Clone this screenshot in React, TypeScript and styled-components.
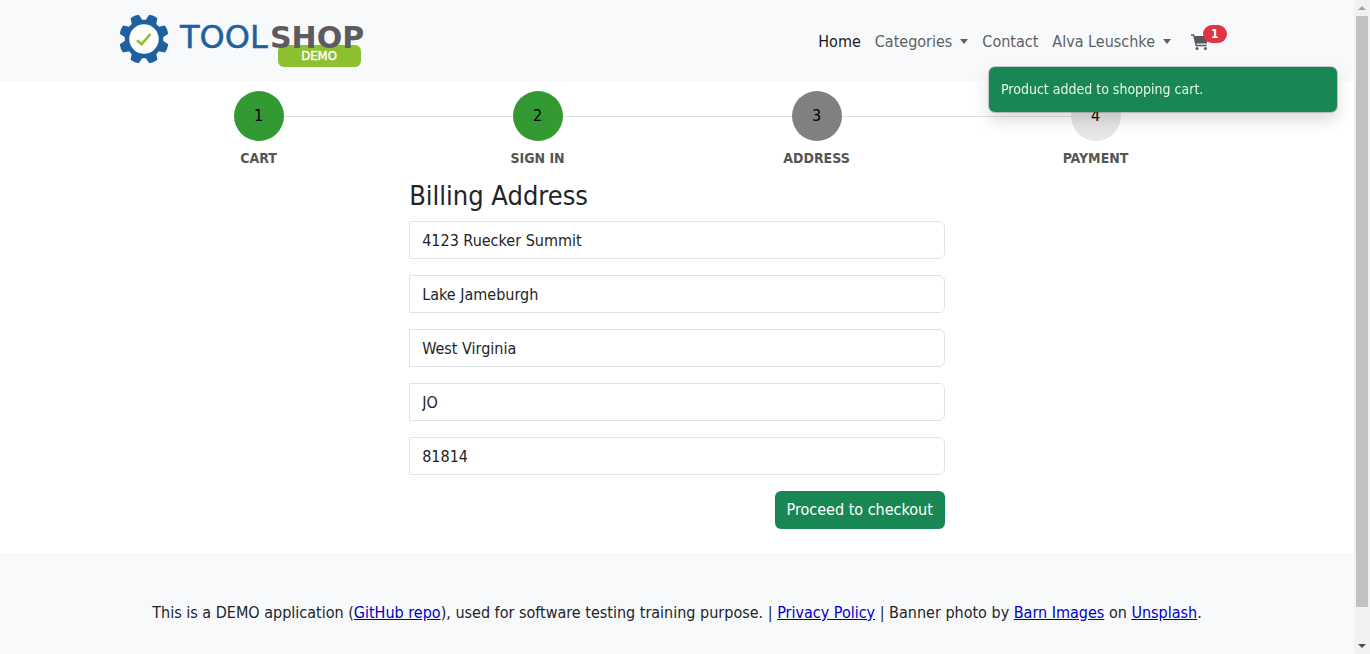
import React from 'react';
import styled, { createGlobalStyle } from 'styled-components';

const fontStack = '"DejaVu Sans Condensed", "DejaVu Sans", Tahoma, sans-serif';

const GlobalStyle = createGlobalStyle`
  *, *::before, *::after { box-sizing: border-box; }
  body {
    margin: 0;
    font-family: ${fontStack};
    font-size: 16px;
    line-height: 24px;
    color: #212529;
    background: #fff;
  }
`;

const Page = styled.div`
  display: flex;
  flex-direction: column;
  min-height: 100vh;
  padding-right: 16px;
`;

const Header = styled.header`
  background: #f8f9fb;
`;

const Container = styled.div`
  width: 100%;
  max-width: 1140px;
  margin: 0 auto;
  padding: 0 12px;
`;

const NavBar = styled(Container)`
  display: flex;
  align-items: center;
  justify-content: space-between;
  height: 81px;
`;

const Brand = styled.a`
  display: block;
  height: 56px;
`;

const NavList = styled.ul`
  display: flex;
  align-items: center;
  margin: 0;
  padding: 0 19px 0 0;
  list-style: none;
`;

const NavLink = styled.a<{ $active?: boolean }>`
  position: relative;
  display: flex;
  align-items: center;
  padding: 9px 7px 7px;
  text-decoration: none;
  color: ${(p) => (p.$active ? '#16181b' : '#5f6163')};
`;

const CartLink = styled(NavLink)`
  padding-left: 13px;
  color: #56585b;
`;

const Caret = styled.span`
  margin-left: 8px;
  border-top: 5px solid;
  border-left: 4px solid transparent;
  border-right: 4px solid transparent;
`;

const Badge = styled.span`
  position: absolute;
  top: 0;
  left: 25px;
  padding: 0 8px;
  border-radius: 9px;
  background: #dc3545;
  color: #fff;
  font-size: 12px;
  font-weight: 700;
  line-height: 18px;
`;

const Toast = styled.div`
  position: fixed;
  top: 67px;
  right: 33px;
  z-index: 2;
  width: 348px;
  padding: 12px;
  border-radius: 6px;
  background: #198754;
  box-shadow: 0 0 0 1px rgba(0, 0, 0, 0.18), 0 8px 16px rgba(0, 0, 0, 0.15);
  color: #e8f3ee;
  font-size: 14px;
  line-height: 21px;
`;

const Steps = styled.ol`
  display: grid;
  grid-template-columns: repeat(4, 1fr);
  margin: 0;
  padding: 10px 0 0;
  list-style: none;
`;

const Step = styled.li`
  position: relative;
  display: flex;
  flex-direction: column;
  align-items: center;
  gap: 7px;

  &:not(:last-child)::after {
    content: '';
    position: absolute;
    top: 25px;
    left: 50%;
    width: 100%;
    height: 1px;
    background: #e0e0e0;
  }
`;

const StepNumber = styled.span<{ $color: string }>`
  z-index: 1;
  display: flex;
  align-items: center;
  justify-content: center;
  width: 50px;
  height: 50px;
  border-radius: 50%;
  background: ${(p) => p.$color};
  color: #000;
`;

const StepLabel = styled.span`
  color: #555;
  font-size: 14px;
  font-weight: 700;
  line-height: 21px;
  text-transform: uppercase;
`;

const AddressForm = styled.form`
  display: flex;
  flex-direction: column;
  gap: 16px;
  width: 48%;
  margin: 0 auto;
  padding: 10px 0 24px;
`;

const Title = styled.h1`
  margin: 0;
  margin-bottom: -8px;
  font-size: 27px;
  font-weight: 400;
  line-height: 34px;
`;

const TextField = styled.input`
  width: 100%;
  height: 38px;
  padding: 6px 12px;
  border: 1px solid #dee2e6;
  border-radius: 0 6px 6px 0;
  background: #fff;
  color: #212529;
  font: inherit;
`;

const SubmitButton = styled.button`
  align-self: flex-end;
  height: 38px;
  padding: 0 12px;
  border: 0;
  border-radius: 6px;
  background: #198754;
  color: #fff;
  font: inherit;
`;

const Footer = styled.footer`
  flex: 1;
  padding: 48px 0 28px;
  background: #f8f9fb;
  text-align: center;

  a { color: #0000c8; }
`;

const FooterText = styled.p`
  margin: 0;
`;

const ScrollTrack = styled.div`
  position: fixed;
  top: 0;
  right: 0;
  bottom: 0;
  z-index: 3;
  display: flex;
  flex-direction: column;
  align-items: center;
  width: 16px;
  background: #f1f1f1;
`;

const ScrollArrow = styled.span<{ $up?: boolean }>`
  display: flex;
  align-items: center;
  justify-content: center;
  height: 16px;

  &::before {
    content: '';
    border: 4px solid transparent;
    border-top-width: ${(p) => (p.$up ? 0 : 4)}px;
    border-bottom-width: ${(p) => (p.$up ? 4 : 0)}px;
    border-${(p) => (p.$up ? 'bottom' : 'top')}-color: ${(p) => (p.$up ? '#a3a3a3' : '#505050')};
  }
`;

const ScrollRail = styled.div`
  flex: 1;
  width: 12px;
`;

const ScrollThumb = styled.div`
  height: 95%;
  background: #c1c1c1;
`;

const gearTeeth = [22.5, 67.5, 112.5, 157.5, 202.5, 247.5, 292.5, 337.5];

function Logo() {
  return (
    <svg width="246" height="56" viewBox="0 0 246 56" role="img" aria-label="Toolshop demo">
      <g transform="translate(25 26)">
        <g fill="#1e619e">
          {gearTeeth.map((angle) => (
            <path key={angle} d="M-6.2 -16 L-4.4 -24.4 Q0 -25.8 4.4 -24.4 L6.2 -16Z" transform={`rotate(${angle})`} />
          ))}
        </g>
        <circle r="17" fill="#fff" stroke="#1e619e" strokeWidth="4.6" />
        <path d="M-7 1.2 L-2.4 5.2 L6.4 -5" fill="none" stroke="#8dc02f" strokeWidth="2.6" />
      </g>
      <rect x="159" y="32" width="83" height="22" rx="6" fill="#8dc02f" />
      <text x="61" y="35" fill="#1e619e" stroke="#1e619e" strokeWidth="0.5" fontFamily="DejaVu Sans" fontSize="32">TOOL</text>
      <text x="151" y="35" fill="#5c5b60" fontFamily="DejaVu Sans" fontSize="30" fontWeight="700">SHOP</text>
      <text x="200" y="47" fill="#fff" fontFamily="DejaVu Sans Condensed" fontSize="13" textAnchor="middle" stroke="#fff" strokeWidth="0.4">DEMO</text>
    </svg>
  );
}

function CartIcon() {
  return (
    <svg width="18" height="16" viewBox="0 0 18 16" fill="currentColor" aria-hidden="true">
      <path d="M0 0.3H3.1L3.6 2H17.6L15.9 9.4H5.4L5.7 10.8H15.6V12.2H4.6L2.2 1.7H0Z" />
      <circle cx="6" cy="14.4" r="1.5" />
      <circle cx="14.4" cy="14.4" r="1.5" />
    </svg>
  );
}

const steps = [
  { label: 'Cart', color: '#339933' },
  { label: 'Sign in', color: '#339933' },
  { label: 'Address', color: '#808080' },
  { label: 'Payment', color: '#e6e6e6' },
];

const fields = [
  { name: 'Street', value: '4123 Ruecker Summit' },
  { name: 'City', value: 'Lake Jameburgh' },
  { name: 'State', value: 'West Virginia' },
  { name: 'Country', value: 'JO' },
  { name: 'Postcode', value: '81814' },
];

export default function App() {
  return (
    <>
      <GlobalStyle />
      <Page>
        <Header>
          <NavBar>
            <Brand href="#"><Logo /></Brand>
            <nav>
              <NavList>
                <li><NavLink href="#" $active>Home</NavLink></li>
                <li><NavLink href="#">Categories<Caret /></NavLink></li>
                <li><NavLink href="#">Contact</NavLink></li>
                <li><NavLink href="#">Alva Leuschke<Caret /></NavLink></li>
                <li>
                  <CartLink href="#" aria-label="cart">
                    <CartIcon />
                    <Badge>1</Badge>
                  </CartLink>
                </li>
              </NavList>
            </nav>
          </NavBar>
        </Header>
        <main>
          <Container>
            <Steps>
              {steps.map((step, i) => (
                <Step key={step.label}>
                  <StepNumber $color={step.color}>{i + 1}</StepNumber>
                  <StepLabel>{step.label}</StepLabel>
                </Step>
              ))}
            </Steps>
            <AddressForm>
              <Title>Billing Address</Title>
              {fields.map((field) => (
                <TextField key={field.name} aria-label={field.name} defaultValue={field.value} />
              ))}
              <SubmitButton type="button">Proceed to checkout</SubmitButton>
            </AddressForm>
          </Container>
        </main>
        <Footer>
          <Container>
            <FooterText>
              This is a DEMO application (<a href="#">GitHub repo</a>), used for software testing training purpose. |{' '}
              <a href="#">Privacy Policy</a> | Banner photo by <a href="#">Barn Images</a> on <a href="#">Unsplash</a>.
            </FooterText>
          </Container>
        </Footer>
      </Page>
      <Toast role="alert">Product added to shopping cart.</Toast>
      <ScrollTrack aria-hidden="true">
        <ScrollArrow $up />
        <ScrollRail><ScrollThumb /></ScrollRail>
        <ScrollArrow />
      </ScrollTrack>
    </>
  );
}
